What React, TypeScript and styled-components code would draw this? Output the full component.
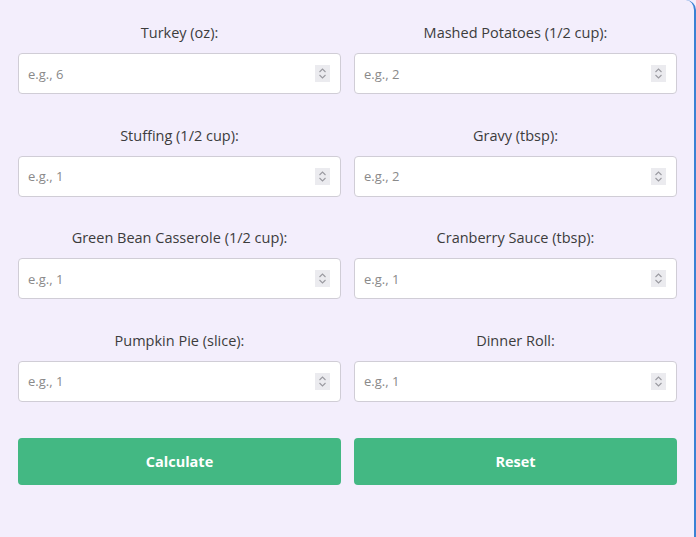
import styled, { createGlobalStyle } from 'styled-components'

/*
 * Global
 */

const GlobalStyle = createGlobalStyle`
    html, body {
        margin: 0;
        padding: 0;
        background: #f3eefc;
    }
    body {
        font-family: 'Open Sans', 'Noto Sans', sans-serif;
    }
`

/*
 * Data
 */

const fields = [
    { label: 'Turkey (oz):', placeholder: 'e.g., 6' },
    { label: 'Mashed Potatoes (1/2 cup):', placeholder: 'e.g., 2' },
    { label: 'Stuffing (1/2 cup):', placeholder: 'e.g., 1' },
    { label: 'Gravy (tbsp):', placeholder: 'e.g., 2' },
    { label: 'Green Bean Casserole (1/2 cup):', placeholder: 'e.g., 1' },
    { label: 'Cranberry Sauce (tbsp):', placeholder: 'e.g., 1' },
    { label: 'Pumpkin Pie (slice):', placeholder: 'e.g., 1' },
    { label: 'Dinner Roll:', placeholder: 'e.g., 1' },
]

/*
 * Styles
 */

const Card = styled.div`
    box-sizing: border-box;
    width: 696px;
    height: 537px;
    padding: 23px 19px 0 18px;
    background: #f3eefc;
    border-right: 2px solid #3b82d4;
    border-top-right-radius: 10px;
`

const Grid = styled.div`
    display: grid;
    grid-template-columns: 323px 323px;
    column-gap: 13px;
    row-gap: 31.67px;
`

const Field = styled.div`
    display: flex;
    flex-direction: column;
`

const Label = styled.label`
    height: 20px;
    margin-bottom: 10px;
    text-align: center;
    font-size: 14.5px;
    line-height: 20px;
    font-weight: 400;
    color: #3c3c3c;
`

const InputWrap = styled.div`
    position: relative;
    height: 41px;
`

const Input = styled.input`
    box-sizing: border-box;
    width: 100%;
    height: 41px;
    padding: 0 9px;
    border: 1px solid #d0cdd6;
    border-radius: 4px;
    background: #fff;
    font-family: 'Open Sans', sans-serif;
    font-size: 13px;
    color: #333;
    outline: none;
    -moz-appearance: textfield;

    &::placeholder {
        color: #8a8a8a;
    }

    &::-webkit-inner-spin-button,
    &::-webkit-outer-spin-button {
        -webkit-appearance: none;
        margin: 0;
    }
`

const Spinner = styled.span`
    position: absolute;
    right: 11px;
    top: 12px;
    width: 15px;
    height: 17px;
    background: #ebebef;
    display: flex;
    align-items: center;
    justify-content: center;
    pointer-events: none;
`

const Actions = styled.div`
    display: grid;
    grid-template-columns: 323px 323px;
    column-gap: 13px;
    margin-top: 36px;
`

const Button = styled.button`
    height: 47px;
    border: none;
    border-radius: 4px;
    background: #43b883;
    color: #fff;
    font-family: 'Open Sans', sans-serif;
    font-size: 14.5px;
    font-weight: 700;
    cursor: pointer;
`

const SpinIcon = () => (
    <svg width="9" height="13" viewBox="0 0 9 13">
        <path
            d="M1.5 5 L4.5 2 L7.5 5 M1.5 8 L4.5 11 L7.5 8"
            fill="none"
            stroke="#9a9aa0"
            strokeWidth="1.1"
        />
    </svg>
)

/*
 * App
 */

export default function App() {
    return (
        <>
            <GlobalStyle />
            <Card>
                <Grid>
                    {fields.map((field, index) => (
                        <Field key={index}>
                            <Label htmlFor={`f${index}`}>{field.label}</Label>
                            <InputWrap>
                                <Input
                                    id={`f${index}`}
                                    type="number"
                                    placeholder={field.placeholder}
                                />
                                <Spinner>
                                    <SpinIcon />
                                </Spinner>
                            </InputWrap>
                        </Field>
                    ))}
                </Grid>
                <Actions>
                    <Button>Calculate</Button>
                    <Button>Reset</Button>
                </Actions>
            </Card>
        </>
    )
}
